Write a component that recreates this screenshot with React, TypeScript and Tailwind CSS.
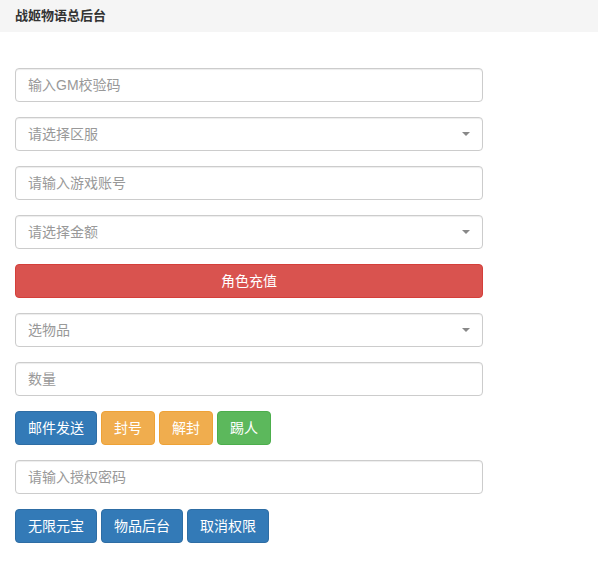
const font = "font-['Helvetica_Neue','Liberation_Sans','Noto_Sans_CJK_SC',sans-serif]"

const inputCls =
  'block w-full h-[34px] px-3 text-[14px] text-[#555] placeholder:text-[#999] bg-white border border-[#ccc] rounded-[4px] shadow-[inset_0_1px_1px_rgba(0,0,0,0.075)] outline-none'

function TextInput({ placeholder }: { placeholder: string }) {
  return <input className={inputCls} placeholder={placeholder} />
}

function SelectBox({ placeholder }: { placeholder: string }) {
  return (
    <div className="relative">
      <div className={`${inputCls} flex items-center text-[#999]`}>{placeholder}</div>
      {/* caret */}
      <span className="absolute right-[13px] top-[15px] w-0 h-0 border-l-[4px] border-r-[4px] border-t-[4px] border-l-transparent border-r-transparent border-t-[#888]" />
    </div>
  )
}

function Btn({ children, color }: { children: React.ReactNode; color: string }) {
  return (
    <button className={`h-[34px] px-3 text-[14px] text-white rounded-[4px] border ${color}`}>
      {children}
    </button>
  )
}

export default function App() {
  return (
    <div className={`${font} bg-white min-h-[571px] w-[598px]`}>
      <div className="h-8 bg-[#f5f5f5] px-[15px] flex items-center text-[13px] font-bold text-[#333]">
        战姬物语总后台
      </div>
      <div className="px-[15px] pt-9 w-[498px] flex flex-col gap-[15px]">
        <TextInput placeholder="输入GM校验码" />
        <SelectBox placeholder="请选择区服" />
        <TextInput placeholder="请输入游戏账号" />
        <SelectBox placeholder="请选择金额" />
        <button className="h-[34px] w-full text-[14px] text-white bg-[#d9534f] border border-[#d43f3a] rounded-[4px]">
          角色充值
        </button>
        <SelectBox placeholder="选物品" />
        <TextInput placeholder="数量" />
        <div className="flex gap-1">
          <Btn color="bg-[#337ab7] border-[#2e6da4]">邮件发送</Btn>
          <Btn color="bg-[#f0ad4e] border-[#eea236]">封号</Btn>
          <Btn color="bg-[#f0ad4e] border-[#eea236]">解封</Btn>
          <Btn color="bg-[#5cb85c] border-[#4cae4c]">踢人</Btn>
        </div>
        <TextInput placeholder="请输入授权密码" />
        <div className="flex gap-1">
          <Btn color="bg-[#337ab7] border-[#2e6da4]">无限元宝</Btn>
          <Btn color="bg-[#337ab7] border-[#2e6da4]">物品后台</Btn>
          <Btn color="bg-[#337ab7] border-[#2e6da4]">取消权限</Btn>
        </div>
      </div>
    </div>
  )
}
